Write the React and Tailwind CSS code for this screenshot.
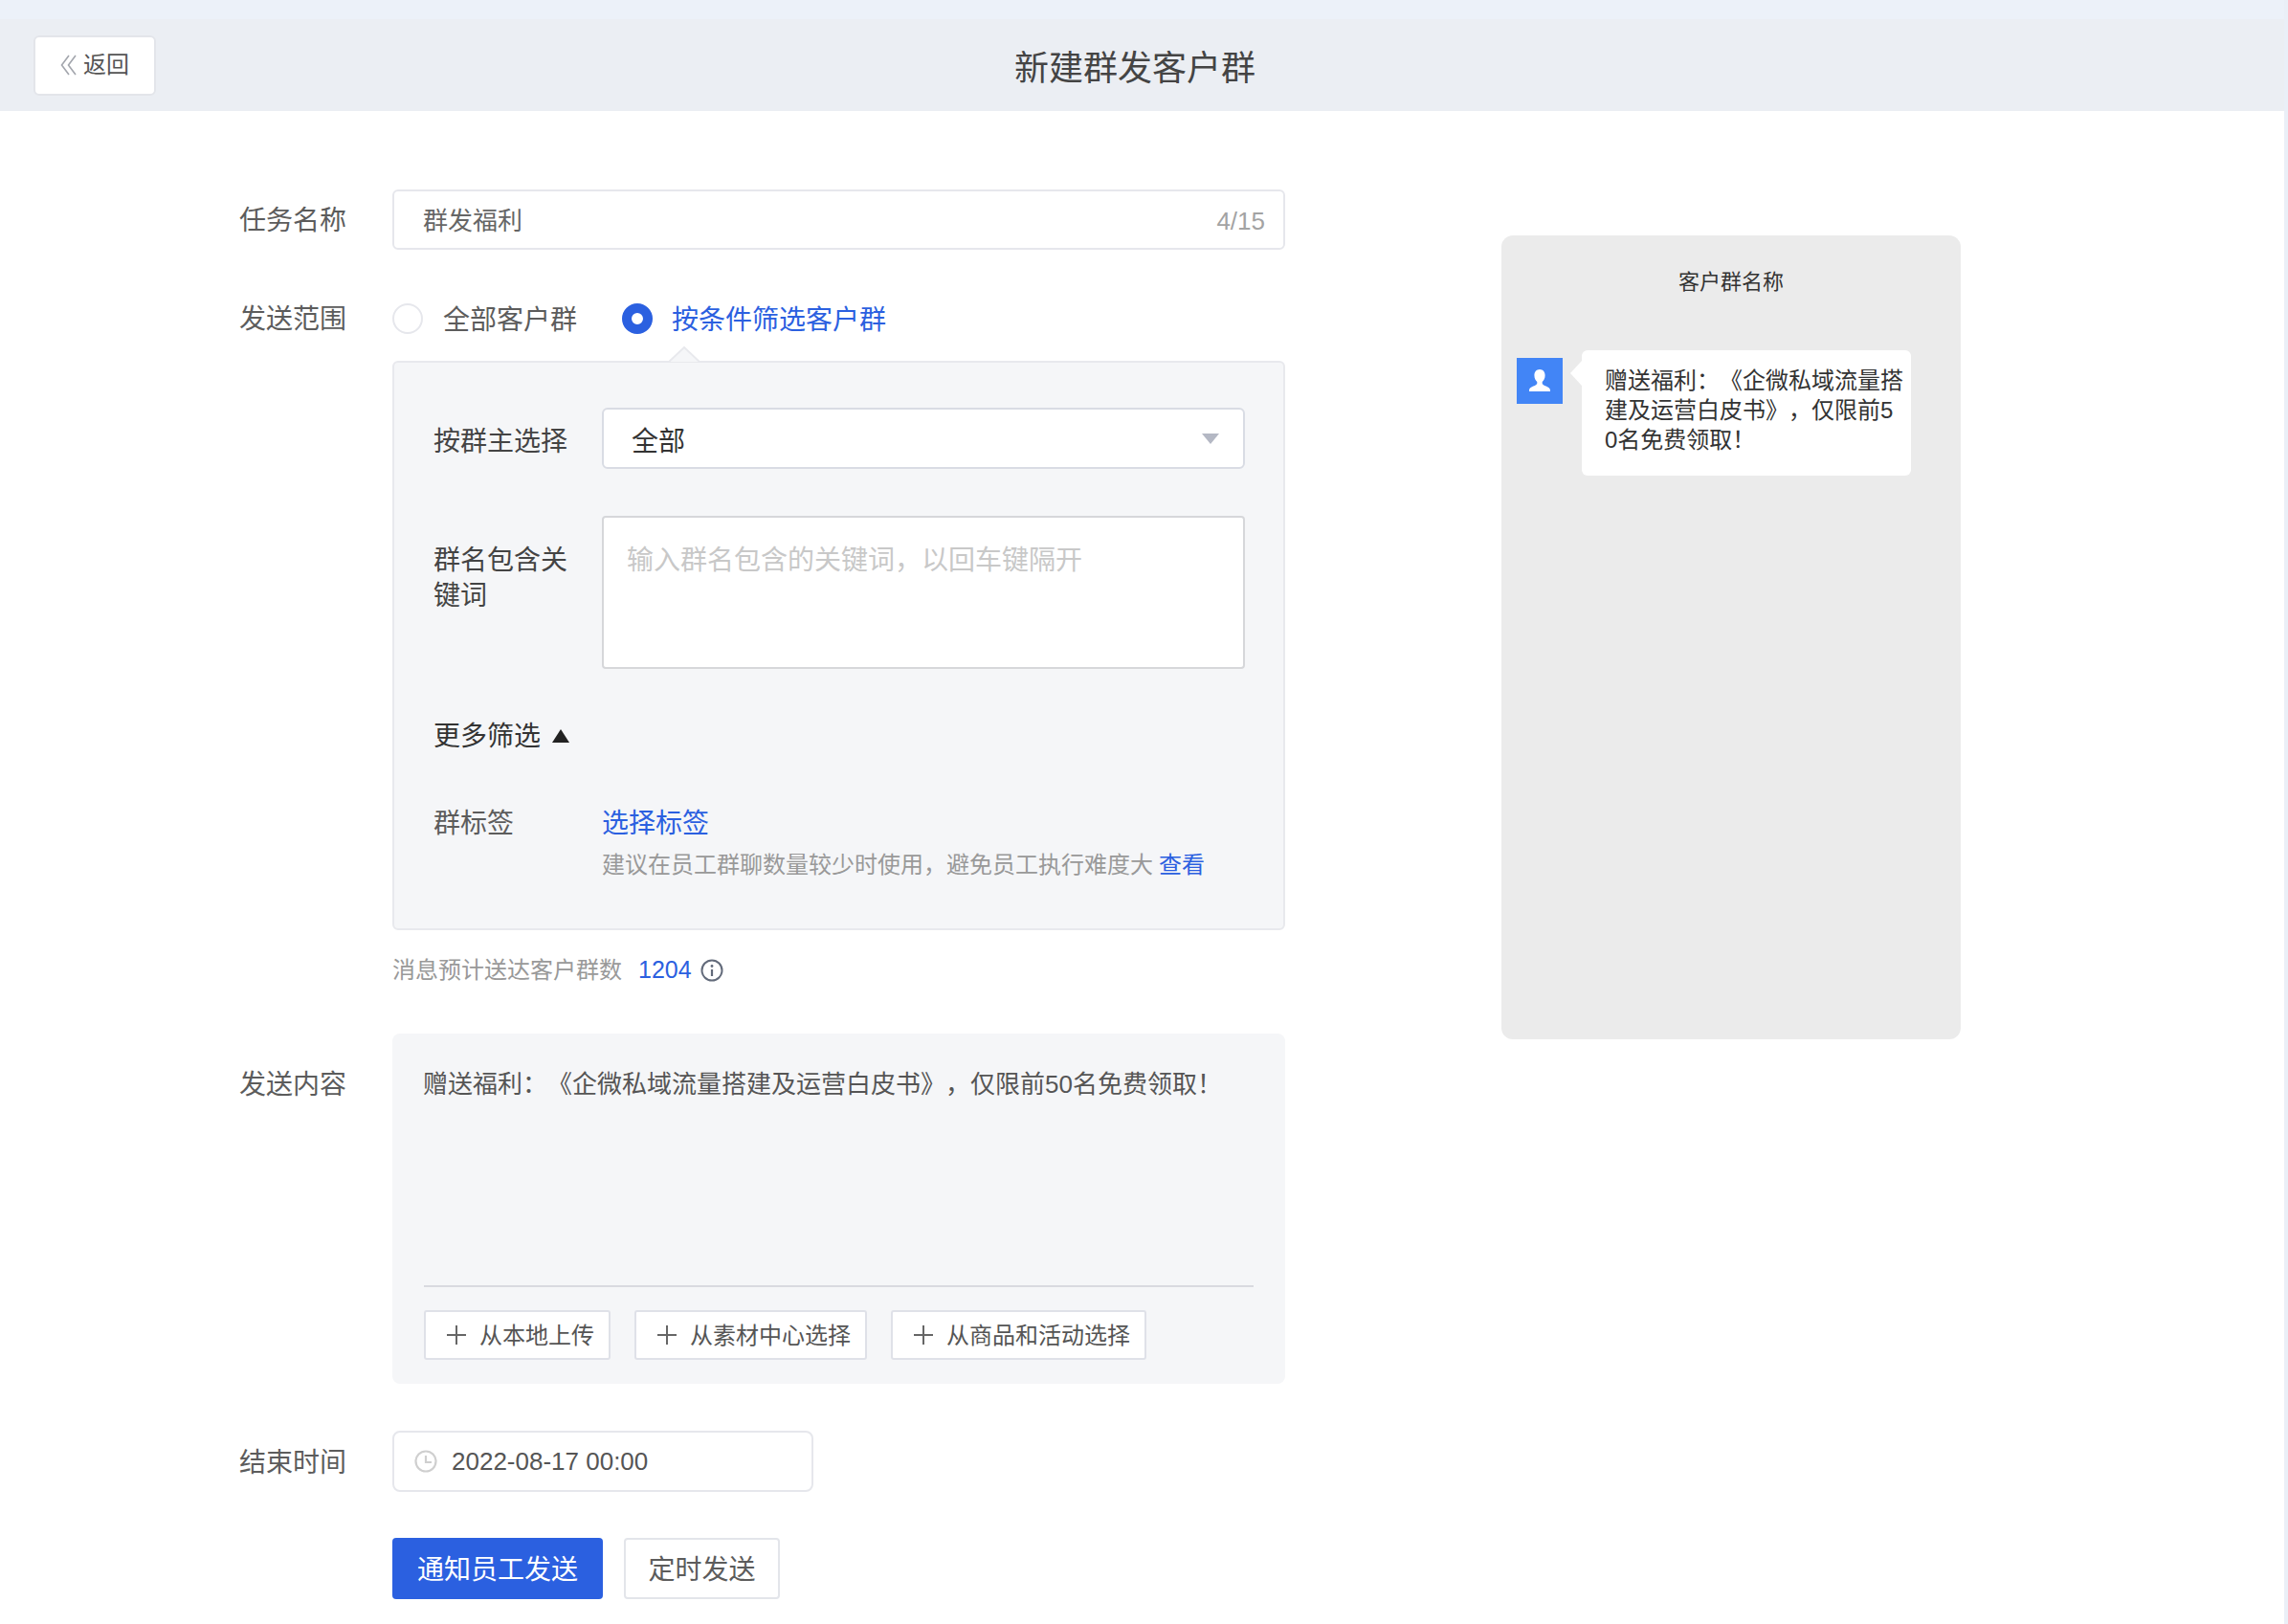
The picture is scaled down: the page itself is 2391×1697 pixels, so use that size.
import React from "react";

const Label = ({ children, className = "" }) => (
  <div className={`w-[160px] shrink-0 text-[28px] leading-[40px] text-[#5c5c5c] ${className}`}>{children}</div>
);

const Plus = () => (
  <svg width="20" height="20" viewBox="0 0 20 20" className="shrink-0">
    <path d="M10 0v20M0 10h20" stroke="#666" strokeWidth="2" />
  </svg>
);

const AddButton = ({ children, className }) => (
  <button className={`flex h-[52px] items-center gap-[14px] rounded-[3px] border-2 border-[#dfe1e8] bg-white pl-[22px] text-[24px] leading-none text-[#555] ${className}`}>
    <Plus />
    <span className="pt-[2px]">{children}</span>
  </button>
);

export default function App() {
  return (
    <div lang="zh-CN" className="h-[1697px] w-full overflow-hidden bg-[#eaeff7] pr-[4px] [font-family:Liberation_Sans,Noto_Sans_CJK_SC,sans-serif] [text-spacing-trim:space-all]">
      <header className="flex h-[116px] items-center bg-[#ebeef3] pl-[35px] pt-[20px] [background-image:linear-gradient(#ecf1f9_20px,transparent_20px)]">
        <button className="flex h-[63px] w-[128px] items-center rounded-[6px] border-2 border-[#e3e5ea] bg-white pl-[26px] text-[24px] leading-none text-[#555]">
          <svg width="18" height="22" viewBox="0 0 18 22" fill="none" stroke="#a3a6ad" strokeWidth="1.6" className="mr-[6px]">
            <path d="M9 1 1.5 11 9 21M16 1 8.5 11 16 21" />
          </svg>
          返回
        </button>
        <h1 className="ml-[897px] mt-[7px] text-[36px] font-normal leading-none text-[#444]">新建群发客户群</h1>
      </header>

      <main className="flex h-[1581px] bg-white">
        <form className="ml-[250px] w-[1093px] pt-[82px]">
          <div className="flex">
            <Label className="pt-[13px]">任务名称</Label>
            <div className="flex h-[63px] w-[933px] items-center justify-between rounded-[6px] border-2 border-[#e6e7ec] pl-[30px] pr-[19px] pt-[3px] text-[26px] text-[#666]">
              <span>群发福利</span>
              <span className="text-[#a3a3a3]">4/15</span>
            </div>
          </div>

          <div className="mt-[54px] flex h-[36px] items-center">
            <Label className="pt-[2px]">发送范围</Label>
            <span className="h-[32px] w-[32px] rounded-full border-2 border-[#e6e7ec]" />
            <span className="ml-[21px] pt-[4px] text-[28px] text-[#5c5c5c]">全部客户群</span>
            <span className="ml-[47px] h-[32px] w-[32px] rounded-full border-[10px] border-[#2b60e0]" />
            <span className="ml-[20px] pt-[4px] text-[28px] text-[#2b60e0]">按条件筛选客户群</span>
          </div>

          <div className="ml-[160px] mt-[11px]">
            <svg width="32" height="17" viewBox="0 0 32 17" className="relative z-10 ml-[289px] -mb-[2px] block">
              <path d="M0 16 16 1 32 16" fill="#f5f6f8" stroke="#e8e9ed" strokeWidth="2" />
            </svg>
            <div className="h-[595px] w-[933px] rounded-[6px] border-2 border-[#e8e9ed] bg-[#f5f6f8] pl-[41px] pt-[47px]">
              <div className="flex">
                <div className="w-[176px] pt-[16px] text-[28px] leading-[40px] text-[#444]">按群主选择</div>
                <div className="flex h-[64px] w-[672px] items-center justify-between rounded-[6px] border-2 border-[#d9dce4] bg-white pl-[29px] pr-[25px] text-[28px] text-[#333]">
                  <span className="pt-[8px]">全部</span>
                  <span className="h-0 w-0 border-x-[9px] border-t-[11px] border-x-transparent border-t-[#b4b8c4]" />
                </div>
              </div>
              <div className="mt-[49px] flex">
                <div className="w-[176px] pt-[28px] text-[28px] leading-[37px] text-[#444]">
                  群名包含关
                  <br />
                  键词
                </div>
                <div className="h-[160px] w-[672px] rounded-[4px] border-2 border-[#d6d7da] bg-white pl-[24px] pt-[25px] text-[28px] leading-[40px] text-[#c8c8c8]">
                  输入群名包含的关键词，以回车键隔开
                </div>
              </div>
              <div className="mt-[51px] flex h-[40px] items-center text-[28px] text-[#333]">
                更多筛选
                <span className="ml-[12px] h-0 w-0 -translate-y-[1px] border-x-[9px] border-b-[14px] border-x-transparent border-b-[#222]" />
              </div>
              <div className="mt-[51px] flex">
                <div className="w-[176px] text-[28px] leading-[40px] text-[#5c5c5c]">群标签</div>
                <div>
                  <div className="text-[28px] leading-[40px] text-[#2b60e0]">选择标签</div>
                  <div className="mt-[5px] text-[24px] leading-[36px] text-[#999]">
                    建议在员工群聊数量较少时使用，避免员工执行难度大<span className="ml-[6px] text-[#2b60e0]">查看</span>
                  </div>
                </div>
              </div>
            </div>
            <div className="mt-[22px] flex h-[40px] items-center text-[24px] text-[#999]">
              消息预计送达客户群数
              <span className="ml-[17px] text-[25px] text-[#2b60e0]">1204</span>
              <svg width="24" height="24" viewBox="0 0 24 24" fill="none" className="ml-[9px]">
                <circle cx="12" cy="12" r="10.5" stroke="#626a7a" strokeWidth="2" />
                <circle cx="12" cy="7.5" r="1.4" fill="#626a7a" />
                <path d="M12 11v7" stroke="#626a7a" strokeWidth="2.2" />
              </svg>
            </div>
          </div>

          <div className="mt-[46px] flex">
            <Label className="pt-[34px]">发送内容</Label>
            <div className="h-[366px] w-[933px] rounded-[8px] bg-[#f5f6f8] pl-[33px] pr-[33px] pt-[35px]">
              <div className="h-[230px] border-b-2 border-[#d9dae0] text-[26px] leading-[36px] text-[#555]">
                <p className="-ml-[1px]">赠送福利：《企微私域流量搭建及运营白皮书》，仅限前50名免费领取！</p>
              </div>
              <div className="mt-[24px] flex gap-[25px]">
                <AddButton className="w-[195px]">从本地上传</AddButton>
                <AddButton className="w-[243px]">从素材中心选择</AddButton>
                <AddButton className="w-[267px]">从商品和活动选择</AddButton>
              </div>
            </div>
          </div>

          <div className="mt-[49px] flex">
            <Label className="pt-[14px]">结束时间</Label>
            <div className="flex h-[64px] w-[440px] items-center rounded-[8px] border-2 border-[#e6e7ec] pl-[21px] text-[26px] text-[#555]">
              <svg width="24" height="24" viewBox="0 0 24 24" fill="none" stroke="#cfcfcf" strokeWidth="2.2" className="mr-[15px]">
                <circle cx="12" cy="12" r="10.5" />
                <path d="M12 6v7h6" />
              </svg>
              2022-08-17 00:00
            </div>
          </div>

          <div className="ml-[160px] mt-[48px] flex gap-[22px] text-[28px]">
            <button className="h-[64px] w-[220px] rounded-[4px] bg-[#2b60e0] pt-[3px] text-white">通知员工发送</button>
            <button className="h-[64px] w-[163px] rounded-[4px] border-2 border-[#e3e5ea] bg-white pt-[3px] text-[#5c5c5c]">定时发送</button>
          </div>
        </form>

        <aside className="ml-[226px] mt-[130px] h-[840px] w-[480px] rounded-[12px] bg-[#ebebeb] pl-[16px] pt-[32px]">
          <div className="pr-[16px] text-center text-[22px] leading-[34px] text-[#333]">客户群名称</div>
          <div className="mt-[54px] flex items-start">
            <div className="mt-[8px] flex h-[48px] w-[48px] items-center justify-center bg-[#4285f6]">
              <svg width="24" height="24" viewBox="0 0 24 24" fill="#fff">
                <path d="M12 0c3.6 0 5.6 2.8 5.6 6.2 0 3-1.3 5.4-2.9 6.8v1.6c0 1 .9 1.7 3 2.6 2.600 1 5.300 1.900 5.300 4.800v1H1v-1c0-2.900 2.700-3.800 5.300-4.800 2.100-.9 3-1.600 3-2.600V13C7.700 11.600 6.400 9.200 6.400 6.200 6.400 2.800 8.400 0 12 0Z" />
              </svg>
            </div>
            <svg width="12" height="26" viewBox="0 0 12 26" className="ml-[8px] mt-[11px] shrink-0" fill="#fff">
              <path d="M0 13 12 0v26Z" />
            </svg>
            <div className="h-[131px] w-[344px] rounded-[6px] bg-white pl-[24px] pt-[16px] text-[24px] leading-[31px] text-[#333]">
              <div className="w-[313px] break-all">赠送福利：《企微私域流量搭建及运营白皮书》，仅限前50名免费领取！</div>
            </div>
          </div>
        </aside>
      </main>
    </div>
  );
}
